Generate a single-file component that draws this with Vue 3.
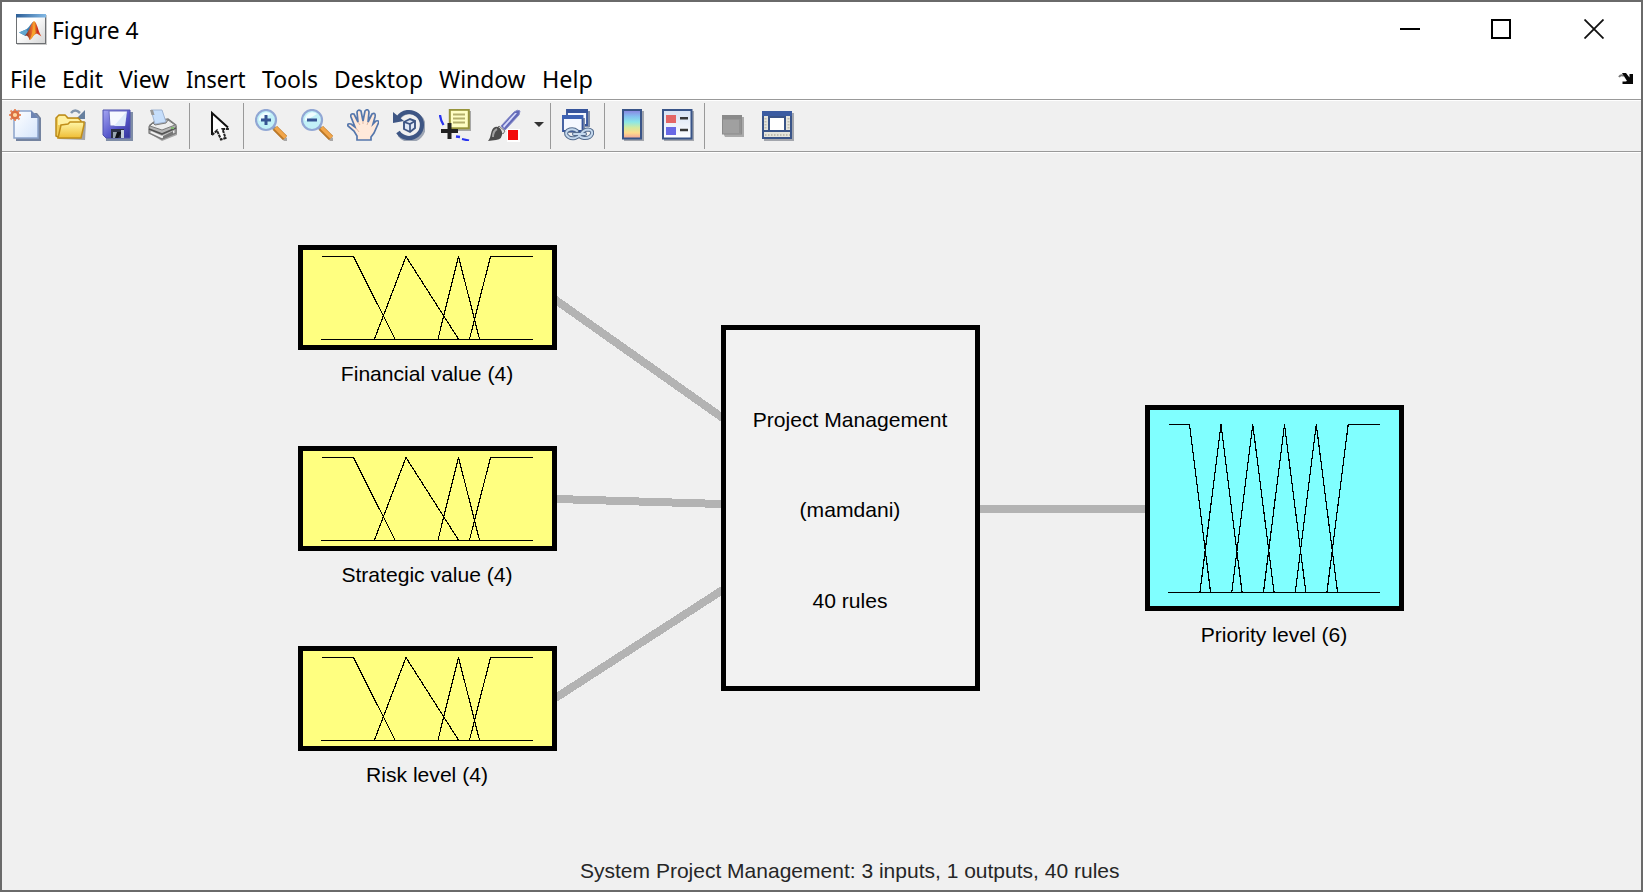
<script setup>
const menus = [
  { label: 'File', width: 36.5 },
  { label: 'Edit', width: 41 },
  { label: 'View', width: 50.5 },
  { label: 'Insert', width: 59.5 },
  { label: 'Tools', width: 56 },
  { label: 'Desktop', width: 89 },
  { label: 'Window', width: 86.5 },
  { label: 'Help', width: 51 },
]

const inputs = [
  { label: 'Financial value (4)', y: 245, base: 381 },
  { label: 'Strategic value (4)', y: 446, base: 582 },
  { label: 'Risk level (4)', y: 646, base: 781.5 },
]

const inputCurves = [
  '23.5,11.5 55.5,11.5 97,94',
  '76.5,94 108,11.5 160.5,94',
  '140,94 160.5,11.5 181.5,94',
  '171.5,94 192.5,11.5 235,11.5',
]

const outputCurves = [
  '23.5,19.5 44.5,19.5 65.5,187',
  '55,187 76,19.5 97,187',
  '86.8,187 107.8,19.5 129,187',
  '118.5,187 139.5,19.5 160.8,187',
  '150.3,187 171.3,19.5 192.5,187',
  '182,187 203.2,19.5 235,19.5',
]
</script>

<template>
  <div class="desktop">
    <div class="window">
      <header class="titlebar">
        <svg class="logo" width="31" height="31" viewBox="0 0 31 31">
          <defs>
            <linearGradient id="lgBar"><stop offset="0" stop-color="#2c5f98" /><stop offset="1" stop-color="#82b8e4" /></linearGradient>
            <linearGradient id="lgPane" x1="0" y1="0" x2="1" y2="1"><stop offset=".4" stop-color="#fff" /><stop offset="1" stop-color="#d4d4d4" /></linearGradient>
            <linearGradient id="lgPeak"><stop offset="0" stop-color="#6b2626" /><stop offset=".4" stop-color="#e8672a" /><stop offset=".55" stop-color="#f5a02c" /><stop offset=".75" stop-color="#c92d1c" /><stop offset="1" stop-color="#e25a30" /></linearGradient>
          </defs>
          <rect x="1" y="1" width="30" height="30" fill="#c9c9c9" />
          <rect x=".5" y=".5" width="29" height="29" fill="url(#lgPane)" stroke="#6d7073" />
          <rect x="0" y="0" width="30" height="3.5" fill="url(#lgBar)" />
          <path d="M3 18.5 10 15.5C13 14 15 9 17.5 7.5L14 17 9.500 22Z" fill="#3d80b4" />
          <path d="M3 18.500 10 15.500 12 18 9 21.500Z" fill="#62a6cf" />
          <path d="M9 21.500C13 18 15 9 18 7C21 8 22 17 25.500 22.500L21 19.500C18 20 16 25 13.500 26C13 23 11 21 9 21.500Z" fill="url(#lgPeak)" />
          <path d="M13.500 26C16 22 17 14 18 8L19.500 19C17 21 16 25 13.500 26Z" fill="#f6a32c" />
        </svg>
        <svg class="title" width="90" height="34"><text x="0" y="25" textLength="86.500" lengthAdjust="spacingAndGlyphs">Figure 4</text></svg>
        <div class="controls">
          <svg width="20" height="20" viewBox="0 0 20 20"><path d="M0 10H20" stroke="#000" stroke-width="2" /></svg>
          <svg width="20" height="20" viewBox="0 0 20 20"><rect x="1" y="1" width="18" height="18" fill="none" stroke="#000" stroke-width="2" /></svg>
          <svg class="close" width="20" height="20" viewBox="0 0 20 20"><path d="M.5.500 19.500 19.500M19.500.500.500 19.500" stroke="#111" stroke-width="1.800" /></svg>
        </div>
      </header>

      <nav class="menubar">
        <svg v-for="m in menus" :key="m.label" class="menu" :width="m.width" height="34">
          <text x="0" y="24.500" :textLength="m.width" lengthAdjust="spacingAndGlyphs">{{ m.label }}</text>
        </svg>
        <svg class="dock" width="16" height="12" viewBox="0 0 16 12">
          <path d="M1 4Q3 1 6 3" fill="none" stroke="#777" stroke-width="2" />
          <path d="M4 0H8L11.500 4.500V1H15V11H4.500V8.500H7.500L9 8Z" fill="#080808" />
        </svg>
      </nav>

      <div class="toolbar">
        <div class="group">
          <svg class="icon" viewBox="0 0 32 32">
            <defs><linearGradient id="gPage" x1="0" y1="0" x2="1" y2="1"><stop offset="0" stop-color="#fff" /><stop offset="1" stop-color="#d5e5fb" /></linearGradient></defs>
            <path d="M7 4H28L32 9V32H7Z" fill="#74839f" />
            <path d="M5 2H22L29 9V29H5Z" fill="url(#gPage)" stroke="#8ba3ca" stroke-width="1.500" />
            <path d="M22 1.500V9H29.500Z" fill="#6e85b3" />
            <path d="M6 0V12M0 6H12M1.500 1.500 10.500 10.500M10.500 1.500 1.500 10.500" stroke="#e79067" stroke-width="2" />
            <circle cx="6" cy="6" r="3.300" fill="#ffd8a0" stroke="#db7042" stroke-width="2.400" />
          </svg>
          <svg class="icon" viewBox="0 0 32 32">
            <defs><linearGradient id="gFold" x1="0" y1="0" x2="0" y2="1"><stop offset="0" stop-color="#fff7a8" /><stop offset="1" stop-color="#efbd35" /></linearGradient></defs>
            <path d="M3 30 30 31 31 13 27 12Z" fill="#a3a4a8" />
            <path d="M16 4Q20-1 25 4" fill="none" stroke="#8295ad" stroke-width="2.500" />
            <path d="M30 1V10H21Z" fill="#667f9e" />
            <path d="M1 27V9L4 6H10L13 9H23L26 12V28H3Z" fill="#f3cf58" stroke="#bb8a1a" stroke-width="1.500" />
            <path d="M3 8 5 7H10L12 10H23L25 12V16H3Z" fill="#fff0a0" />
            <path d="M6 16 13 15 15 13H29V16L26 29H3Z" fill="url(#gFold)" stroke="#c18e18" stroke-width="1.500" />
          </svg>
          <svg class="icon" viewBox="0 0 32 32">
            <defs><linearGradient id="gDisk" x1="0" y1="0" x2="1" y2="1"><stop offset="0" stop-color="#a6a6f2" /><stop offset=".55" stop-color="#5859cc" /><stop offset="1" stop-color="#32339a" /></linearGradient></defs>
            <path d="M4 3H32V32H5Z" fill="#7e8ca6" />
            <path d="M2 1H29V29H5L2 26Z" fill="url(#gDisk)" stroke="#4d50ad" />
            <path d="M8 2H26L24 17H9Z" fill="#f6f9ff" stroke="#6a6cc2" />
            <path d="M24 17 26 2 13 17Z" fill="#dce9fa" />
            <rect x="10" y="20" width="13" height="9" fill="#2c3146" />
            <rect x="12" y="23" width="4" height="6" fill="#98a5af" /><path d="M16 23H21L17 29H14Z" fill="#101218" /><rect x="20" y="21" width="3" height="8" fill="#c3ceda" />
          </svg>
          <svg class="icon" viewBox="0 0 32 32">
            <path d="M5 26 15 32 30 26V17L8 18Z" fill="#a5a5a5" />
            <path d="M3 16 8 12 21 10 29 16V24L15 30 2 24V18Z" fill="#b5b5b5" stroke="#777" stroke-width="1.200" />
            <path d="M4 1H15L19 13 8 15Z" fill="#c6defb" stroke="#a0b4d2" />
            <path d="M3 1H6L7.500 6H4.500Z" fill="#999" />
            <path d="M3 17 15 21 28 16 21 11 19 14 8 16 6 14Z" fill="#ededed" stroke="#7c7c7c" />
            <path d="M2 20 15 25 29 19" fill="none" stroke="#555" stroke-width="1.800" />
            <path d="M4 23 15 28 27 22.500" fill="none" stroke="#f4f4f4" stroke-width="1.800" />
            <path d="M16 27 26 22V25L16 30Z" fill="#777" /><rect x="24" y="18" width="3" height="2" fill="#82b872" />
          </svg>
        </div>
        <div class="group">
          <svg class="icon" viewBox="0 0 32 32">
            <path d="M11 4V26L16 21.500 20 30.500 25 28.500 21.500 20H28Z" fill="#fff" />
            <path d="M11 26V4L27 18.500" fill="none" stroke="#111" stroke-width="2" />
            <path d="M11 26 16 21.500 20 30.500 24.500 29 21.500 20H28" fill="none" stroke="#222" stroke-width="2" stroke-dasharray="3 .8" />
          </svg>
        </div>
        <div class="group">
          <svg v-for="sign in ['plus', 'minus']" :key="sign" class="icon" viewBox="0 0 32 32">
            <path d="M20 19 32 29V32H29L19 22Z" fill="#a9a7a6" />
            <path d="M17 17 20 20" stroke="#88959f" stroke-width="4" />
            <path d="M20 19 30 29" stroke="#bd7926" stroke-width="6" />
            <path d="M20.500 18.500 30.500 28.500" stroke="#f2a64a" stroke-width="3.500" />
            <circle cx="11" cy="11" r="10" fill="#c2f1f8" stroke="#91a7d4" stroke-width="2.200" />
            <path d="M4 12A7.500 7.500 0 0 1 16 5Q11 8 4 12" fill="#effdff" />
            <path d="M6 11H16" stroke="#365493" stroke-width="3" />
            <path v-if="sign === 'plus'" d="M11 6V16" stroke="#365493" stroke-width="3" />
          </svg>
          <svg class="icon" viewBox="0 0 32 32">
            <path d="M10 31V27L7 22 1 17Q0 14 4 15L8 18 4 8Q3 4 7 5L11 13 10 3Q11 0 14 2L16 12 18 2Q21-1 22 3L21 13 25 5Q29 3 28 8L26 15 29 12Q33 11 31 15L27 24 24 28V31Z" fill="#ffe9da" stroke="#5577ac" stroke-width="1.700" />
            <path d="M9 19 12 23M11 13 13 16M16 12V15M21 13 20 16" stroke="#dfb9a6" fill="none" />
          </svg>
          <svg class="icon" viewBox="0 0 32 32">
            <path d="M4 10A14 14 0 1 1 5 25" fill="none" stroke="#9da5b3" stroke-width="3" transform="translate(1 1)" />
            <path d="M5 9A13 13 0 1 1 5 23" fill="none" stroke="#3e5684" stroke-width="4.200" />
            <path d="M0 3 11 12 0 14Z" fill="#3e5684" />
            <path d="M11 13 17 10 22 12V19L17 23 11 20Z" fill="#e0e8f6" stroke="#3e5684" stroke-width="1.900" />
            <path d="M11 13 17 15 22 12M17 15V23" fill="none" stroke="#3e5684" stroke-width="1.700" />
          </svg>
          <svg class="icon" viewBox="0 0 32 32">
            <rect x="12" y="2" width="20" height="20" fill="#a7a7a7" />
            <rect x="10.800" y=".800" width="19" height="18.500" fill="#fffec4" stroke="#97943c" stroke-width="2" />
            <path d="M14 5.500H26M14 9.500H26M14 13.500H26" stroke="#b4af6c" stroke-width="1.800" />
            <path d="M1 6Q1.500 11 4.500 16M17 27.500 21 28M23 30 30 31.500" fill="none" stroke="#2732f0" stroke-width="2.300" />
            <path d="M10.500 14V30M2 22H19" stroke="#222" stroke-width="4" />
          </svg>
          <svg class="brush" viewBox="0 0 55 32">
            <path d="M16 17 29 3Q33 0 35 2L34 6 20 21Z" fill="#6269b8" stroke="#8589c7" />
            <path d="M18 17 30 4 32 4 19 19Z" fill="#d6d9fb" />
            <path d="M14 17 20 22 18 25 11 20Z" fill="#dedede" stroke="#777" />
            <path d="M3 32C7 28 5 20 10 18Q15 17 17 23Q18 30 11 31Z" fill="#4b4b4b" />
            <path d="M8 28Q8 22 12 20" fill="none" stroke="#a0a0a0" stroke-width="2" />
            <rect x="22" y="20" width="13" height="13" fill="#fff" /><rect x="23" y="21" width="10" height="10" fill="#f30b0b" />
            <path d="M49 13H59L54 18Z" fill="#333" />
          </svg>
        </div>
        <div class="group">
          <svg class="icon" viewBox="0 0 32 32">
            <path d="M8 2H28V18H8Z" fill="#8290aa" />
            <path d="M5 1H25V16H5Z" fill="#f5f8ff" stroke="#36549b" stroke-width="1.800" /><path d="M4.500 0H26V4H4.500Z" fill="#36549b" />
            <path d="M2 9H23V24H2Z" fill="#8290aa" />
            <path d="M1 7H20.500V22H1Z" fill="#f5f8ff" stroke="#36549b" stroke-width="1.800" /><path d="M0 6H21V10H0Z" fill="#3d62b3" />
            <g fill="none" stroke-linecap="round">
              <path d="M15 22Q12 19.500 8 20.500Q3 22 4.500 26Q7 30 13 29Q17 28 19 25Q22 20.500 26 20.500Q31 21 30 25Q28 29.500 22 29Q18 28.500 17 26M12 25H23" stroke="#536b8d" stroke-width="4" />
              <path d="M15 22Q12 19.500 8 20.500Q3 22 4.500 26Q7 30 13 29Q17 28 19 25Q22 20.500 26 20.500Q31 21 30 25Q28 29.500 22 29Q18 28.500 17 26M12 25H23" stroke="#c4d8ed" stroke-width="2" />
            </g>
          </svg>
        </div>
        <div class="group">
          <svg class="icon" viewBox="0 0 32 32">
            <defs><linearGradient id="gMap" x1="0" y1="0" x2="0" y2="1"><stop offset="0" stop-color="#8b80df" /><stop offset=".22" stop-color="#83bff0" /><stop offset=".42" stop-color="#8be7e7" /><stop offset=".62" stop-color="#d3eaa0" /><stop offset=".8" stop-color="#ffdb8c" /><stop offset="1" stop-color="#f0a09a" /></linearGradient></defs>
            <rect x="8" y="2" width="20" height="30" fill="#a3a6ad" />
            <rect x="7" y="1" width="18" height="28.500" fill="url(#gMap)" stroke="#395488" stroke-width="2" />
          </svg>
          <svg class="icon" viewBox="0 0 32 32">
            <defs><linearGradient id="gLeg" x1="0" y1="0" x2="0" y2="1"><stop offset="0" stop-color="#d7e2f4" /><stop offset="1" stop-color="#fff" /></linearGradient></defs>
            <rect x="2" y="2" width="30" height="30" fill="#a3a6ad" />
            <rect x="1" y="1" width="28.500" height="28.500" fill="url(#gLeg)" stroke="#395488" stroke-width="2" />
            <rect x="4" y="6" width="10" height="8" fill="#e36565" /><rect x="4" y="18" width="10" height="8" fill="#6868e5" />
            <path d="M18 9.200H26M18 21H26" stroke="#383838" stroke-width="2.500" />
          </svg>
        </div>
        <div class="group">
          <svg class="icon" viewBox="0 0 32 32">
            <path d="M8 8H28V28H9L8 26Z" fill="#aaa" />
            <rect x="6.500" y="6.500" width="19" height="18.500" fill="#a0a0a0" stroke="#8a8a8a" /><rect x="6" y="6" width="20" height="4.500" fill="#8a8a8a" /><path d="M24 10V24" stroke="#929292" stroke-width="2" />
          </svg>
          <svg class="icon" viewBox="0 0 32 32">
            <rect x="2" y="4" width="30" height="28" fill="#a3a6ad" />
            <rect x="1" y="3" width="28" height="26" fill="#e4e4dc" stroke="#395488" stroke-width="2" />
            <rect x="0" y="2" width="30" height="5" fill="#3a5ba1" />
            <path d="M2 22H28" stroke="#395488" stroke-width="2" />
            <rect x="7" y="8" width="16" height="14" fill="#fff" stroke="#395488" stroke-width="2" />
            <path d="M3.500 9V21M26.500 9V21M3 26H28" stroke="#bebcb0" stroke-width="2" stroke-dasharray="1.500 1.500" />
          </svg>
        </div>
      </div>

      <main class="canvas">
        <svg width="1639" height="737" viewBox="2 153 1639 737">
          <g class="links">
            <path d="M550 296 728 421.700" />
            <path d="M550 498.800 728 504.200" />
            <path d="M550 701.500 728 586.500" />
            <path d="M978 509H1148" />
          </g>

          <g v-for="node in inputs" :key="node.label">
            <g :transform="`translate(298 ${node.y})`">
              <rect class="box input" x="2.500" y="2.500" width="254" height="100" />
              <path class="curve" d="M23 94.500H235" />
              <polyline v-for="c in inputCurves" :key="c" class="curve" :points="c" />
            </g>
            <text class="label" x="427" :y="node.base">{{ node.label }}</text>
          </g>

          <rect class="box system" x="723.500" y="327.500" width="254" height="361" />
          <text class="label" x="850" y="427">Project Management</text>
          <text class="label" x="850" y="517">(mamdani)</text>
          <text class="label" x="850" y="607.500">40 rules</text>

          <g transform="translate(1145 405)">
            <rect class="box output" x="2.500" y="2.500" width="254" height="201" />
            <path class="curve" d="M23 187.500H235" />
            <polyline v-for="c in outputCurves" :key="c" class="curve" :points="c" />
          </g>
          <text class="label" x="1274" y="642">Priority level (6)</text>

          <text class="status" x="580" y="878" textLength="539.500" lengthAdjust="spacingAndGlyphs">System Project Management: 3 inputs, 1 outputs, 40 rules</text>
        </svg>
      </main>
    </div>
  </div>
</template>

<style>
body {
  margin: 0;
  overflow: hidden;
}
</style>

<style scoped>
.desktop {
  box-sizing: border-box;
  width: 1643px;
  height: 892px;
  padding: 2px;
  background: #6a6a6a;
}
.window {
  display: flex;
  flex-direction: column;
  height: 888px;
  background: #fff;
}
svg {
  display: block;
  flex: none;
}
.titlebar {
  display: flex;
  align-items: flex-start;
  height: 59px;
}
.logo {
  margin: 12px 0 0 14px;
}
.title {
  margin: 12px 0 0 5px;
}
.title text,
.menu text {
  font-family: "Noto Sans", "Open Sans", sans-serif;
  font-size: 23.5px;
  fill: #000;
}
.controls {
  display: flex;
  gap: 71px;
  margin: 17px 37px 0 auto;
}
.close {
  margin-left: 2px;
}
.menubar {
  display: flex;
  gap: 16.2px;
  height: 36px;
  padding: 2px 7px 0 7.5px;
}
.menu {
  overflow: visible;
}
.dock {
  margin: 10px 0 0 auto;
}
.toolbar {
  box-sizing: border-box;
  display: flex;
  height: 54px;
  padding: 3px 7px 0 7px;
  border-top: 1px solid #999;
  border-bottom: 1px solid #fff;
  box-shadow: inset 0 1px #fff, inset 0 -1px #999;
  background: #f0f0f0;
}
.group {
  display: flex;
  gap: 14px;
  height: 46px;
  padding: 6px 10px 0 0;
  box-sizing: border-box;
}
.group + .group {
  padding-left: 11px;
  border-left: 1px solid #999;
}
.icon {
  width: 32px;
  height: 32px;
}
.brush {
  width: 55px;
  height: 32px;
  overflow: visible;
}
.canvas {
  flex: 1;
  background: #f0f0f0;
}
.links path {
  fill: none;
  stroke: #b3b3b3;
  stroke-width: 8;
  shape-rendering: crispEdges;
}
.box {
  stroke: #000;
  stroke-width: 5;
  shape-rendering: crispEdges;
}
.input {
  fill: #ffff80;
}
.output {
  fill: #80ffff;
}
.system {
  fill: #f2f2f2;
}
.curve {
  fill: none;
  stroke: #000;
  stroke-width: 1.15;
  shape-rendering: crispEdges;
}
.label,
.status {
  font-family: "Liberation Sans", Arial, sans-serif;
  font-size: 21.1px;
}
.label {
  fill: #000;
  text-anchor: middle;
}
.status {
  fill: #262626;
}
</style>
